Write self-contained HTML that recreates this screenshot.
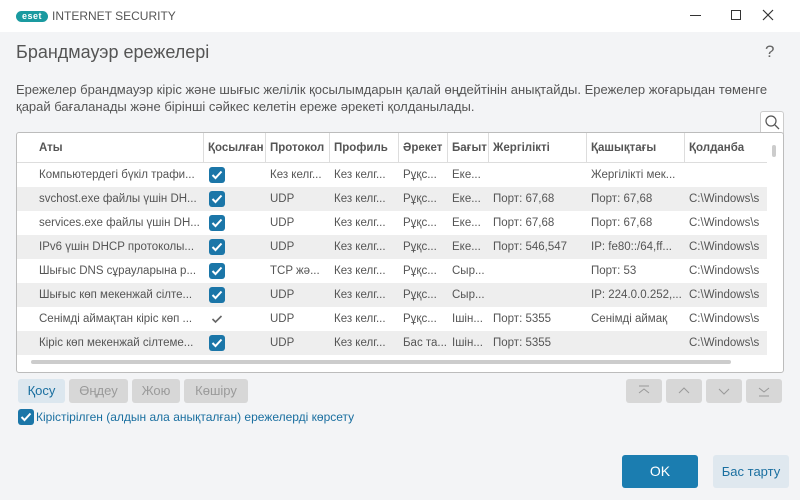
<!DOCTYPE html>
<html><head><meta charset="utf-8"><style>
*{box-sizing:border-box;margin:0;padding:0}
body{width:800px;height:500px;overflow:hidden;background:#f3f4f6;font-family:"Liberation Sans","DejaVu Sans",sans-serif;color:#555;position:relative;font-size:12px}
.tb{position:absolute;left:0;top:0;width:800px;height:32px;background:#fff}
.abs{position:absolute}
.tbl{position:absolute;left:16px;top:132px;width:768px;height:241px;border:1px solid #bcbcbc;border-radius:3px;background:#fff;overflow:hidden}
.row{position:absolute;left:0;width:750px;height:24px}
.c{position:absolute;top:0;line-height:24px;white-space:nowrap;font-size:11.5px;color:#555}
.h{position:absolute;top:0;height:30px;line-height:30px;font-weight:bold;font-size:11.5px;color:#555;border-right:1px solid #ddd;padding-left:4px}
.cb{position:absolute;top:4px;left:192px;width:16px;height:16px;background:#1b76a8;border-radius:3px}
.cb svg{position:absolute;left:2px;top:2px}
.btn{position:absolute;top:379px;height:24px;line-height:24px;text-align:center;border-radius:3px;font-size:13px}
.dis{background:#d7d7d7;color:#9a9a9a}
.ar{position:absolute;top:379px;width:36px;height:24px;background:#d7d7d7;border-radius:3px}
</style></head><body>
<div class="tb">
 <div class="abs" style="left:16px;top:11px;width:32px;height:11px;background:#1a9aa0;border-radius:6px;color:#fff;font-size:9px;font-weight:bold;line-height:11px;text-align:center;letter-spacing:0.5px">eset</div>
 <div class="abs" style="left:52px;top:9px;font-size:12px;color:#555">INTERNET SECURITY</div>
 <div class="abs" style="left:690px;top:15px;width:11px;height:1px;background:#333"></div>
 <div class="abs" style="left:731px;top:10px;width:10px;height:10px;border:1px solid #333"></div>
 <svg class="abs" style="left:762px;top:9px" width="12" height="12"><path d="M1 1L11 11M11 1L1 11" stroke="#333" stroke-width="1.2"/></svg>
</div>
<div class="abs" style="left:16px;top:42px;font-size:18px;color:#555">Брандмауэр ережелері</div>
<div class="abs" style="left:765px;top:42px;font-size:17px;color:#666">?</div>
<div class="abs" style="left:16px;top:81px;width:775px;font-size:13px;line-height:17px;color:#555">Ережелер брандмауэр кіріс және шығыс желілік қосылымдарын қалай өңдейтінін анықтайды. Ережелер жоғарыдан төменге қарай бағаланады және бірінші сәйкес келетін ереже әрекеті қолданылады.</div>
<div class="abs" style="left:760px;top:111px;width:24px;height:23px;background:#fff;border:1px solid #ccc;border-bottom:none;border-radius:3px 3px 0 0"><svg width="22" height="22"><circle cx="10" cy="9" r="5" fill="none" stroke="#555" stroke-width="1.2"/><path d="M14 13L18 17" stroke="#555" stroke-width="1.3"/></svg></div>
<div class="tbl">
 <div style="position:absolute;left:0;top:0;width:750px;height:30px;border-bottom:1px solid #ddd">
  <div class="h" style="left:0;width:187px;padding-left:22px">Аты</div>
  <div class="h" style="left:187px;width:62px">Қосылған</div>
  <div class="h" style="left:249px;width:64px">Протокол</div>
  <div class="h" style="left:313px;width:69px">Профиль</div>
  <div class="h" style="left:382px;width:49px">Әрекет</div>
  <div class="h" style="left:431px;width:41px">Бағыт</div>
  <div class="h" style="left:472px;width:98px">Жергілікті</div>
  <div class="h" style="left:570px;width:98px">Қашықтағы</div>
  <div class="h" style="left:668px;width:82px;border:none">Қолданба</div>
 </div>
 <div class="abs" style="left:755px;top:12px;width:4px;height:12px;background:#ccc;border-radius:2px"></div>
 <div class="abs" style="left:14px;top:227px;width:700px;height:4px;background:#ccc;border-radius:2px"></div>
 <div id="rows"></div>
</div>
<div class="btn" style="left:18px;width:47px;background:#dce7ef;color:#1a6fa0">Қосу</div>
<div class="btn dis" style="left:69px;width:59px">Өңдеу</div>
<div class="btn dis" style="left:132px;width:48px">Жою</div>
<div class="btn dis" style="left:184px;width:64px">Көшіру</div>
<div class="ar" style="left:626px"><svg width="36" height="24"><path d="M13 7H23M13 14L18 10L23 14" stroke="#999" fill="none"/></svg></div>
<div class="ar" style="left:666px"><svg width="36" height="24"><path d="M13 14L18 9L23 14" stroke="#999" fill="none"/></svg></div>
<div class="ar" style="left:706px"><svg width="36" height="24"><path d="M13 10L18 15L23 10" stroke="#999" fill="none"/></svg></div>
<div class="ar" style="left:746px"><svg width="36" height="24"><path d="M13 9L18 13L23 9M13 17H23" stroke="#999" fill="none"/></svg></div>
<div class="abs" style="left:18px;top:409px;width:16px;height:16px;background:#1b76a8;border-radius:3px"><svg width="16" height="16"><path d="M3.5 8L6.5 11L12.5 4.5" stroke="#fff" stroke-width="2" fill="none"/></svg></div>
<div class="abs" style="left:36px;top:410px;font-size:12px;color:#1a6fa0">Кірістірілген (алдын ала анықталған) ережелерді көрсету</div>
<div class="abs" style="left:622px;top:455px;width:76px;height:33px;background:#1b7db0;border-radius:3px;color:#fff;font-size:14px;line-height:33px;text-align:center">OK</div>
<div class="abs" style="left:713px;top:455px;width:76px;height:33px;background:#dfe8ef;border-radius:3px;color:#1a6fa0;font-size:13px;line-height:33px;text-align:center">Бас тарту</div>
<script>
var d=[
["Компьютердегі бүкіл трафи...",1,"Кез келг...","Кез келг...","Рұқс...","Еке...","","Жергілікті мек...",""],
["svchost.exe файлы үшін DH...",1,"UDP","Кез келг...","Рұқс...","Еке...","Порт: 67,68","Порт: 67,68","C:\\Windows\\s"],
["services.exe файлы үшін DH...",1,"UDP","Кез келг...","Рұқс...","Еке...","Порт: 67,68","Порт: 67,68","C:\\Windows\\s"],
["IPv6 үшін DHCP протоколы...",1,"UDP","Кез келг...","Рұқс...","Еке...","Порт: 546,547","IP: fe80::/64,ff...","C:\\Windows\\s"],
["Шығыс DNS сұрауларына р...",1,"TCP жә...","Кез келг...","Рұқс...","Сыр...","","Порт: 53","C:\\Windows\\s"],
["Шығыс көп мекенжай сілте...",1,"UDP","Кез келг...","Рұқс...","Сыр...","","IP: 224.0.0.252,...","C:\\Windows\\s"],
["Сенімді аймақтан кіріс көп ...",2,"UDP","Кез келг...","Рұқс...","Ішін...","Порт: 5355","Сенімді аймақ","C:\\Windows\\s"],
["Кіріс көп мекенжай сілтеме...",1,"UDP","Кез келг...","Бас та...","Ішін...","Порт: 5355","","C:\\Windows\\s"]];
var x=[22,0,253,317,386,435,476,574,672],h="";
d.forEach(function(r,i){h+='<div class="row" style="top:'+(30+i*24)+'px;background:'+(i%2?'#eeeeee':'#fff')+'">';
r.forEach(function(v,j){if(j==1){h+=v==1?'<div class="cb"><svg width="12" height="12"><path d="M1.5 6L4.5 9L10.5 2.5" stroke="#fff" stroke-width="2" fill="none"/></svg></div>':'<svg style="position:absolute;left:194px;top:7px" width="12" height="10"><path d="M1.5 5L4.5 8L10.5 2" stroke="#666" stroke-width="1.6" fill="none"/></svg>';}
else h+='<div class="c" style="left:'+x[j]+'px">'+v+'</div>';});h+='</div>';});
document.getElementById('rows').innerHTML=h;
</script>
</body></html>
